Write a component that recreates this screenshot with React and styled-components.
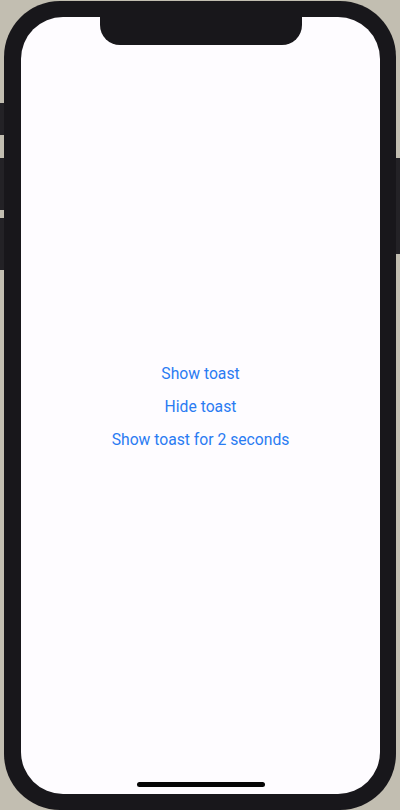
import React from "react";
import styled, { createGlobalStyle } from "styled-components";

const GlobalStyle = createGlobalStyle`
  html, body {
    margin: 0;
    padding: 0;
    background: #c2beb1;
    overflow: hidden;
  }
`;

const Page = styled.div`
  width: 400px;
  height: 810px;
  display: flex;
  align-items: flex-start;
`;

const Rail = styled.div`
  width: 4px;
  display: flex;
  flex-direction: column;
  flex-shrink: 0;
`;

const SideButton = styled.div`
  width: 4px;
  background: #232226;
  margin-top: ${(p) => p.gap}px;
  height: ${(p) => p.h}px;
`;

const Phone = styled.div`
  width: 392px;
  height: 809px;
  margin-top: 1px;
  flex-shrink: 0;
  box-sizing: border-box;
  padding: 16px 16px 16px 17px;
  background: #18171b;
  border-radius: 56px;
`;

const Screen = styled.div`
  height: 100%;
  background: #fefcff;
  border-radius: 42px;
  display: flex;
  flex-direction: column;
  align-items: center;
  overflow: hidden;
`;

const Notch = styled.div`
  width: 202px;
  height: 28px;
  flex-shrink: 0;
  background: #18171b;
  border-radius: 0 0 20px 20px;
`;

const Content = styled.div`
  flex: 1;
  display: flex;
  flex-direction: column;
  align-items: center;
  justify-content: center;
  gap: 13px;
  padding-top: 2px;
`;

const BottomBar = styled.div`
  height: 28px;
  flex-shrink: 0;
  display: flex;
  align-items: flex-end;
  padding-bottom: 7px;
  box-sizing: border-box;
`;

const HomeIndicator = styled.div`
  width: 128px;
  height: 5px;
  border-radius: 3px;
  background: #050505;
`;

const TextButton = styled.button`
  border: none;
  background: none;
  padding: 0;
  font-family: Roboto, "Noto Sans", sans-serif;
  font-size: 15.7px;
  line-height: 20px;
  color: #2a7bf2;
  cursor: pointer;
`;

export default function App() {
  return (
    <>
      <GlobalStyle />
      <Page>
        <Rail>
          <SideButton gap={103} h={32} />
          <SideButton gap={23} h={52} />
          <SideButton gap={8} h={52} />
        </Rail>
        <Phone>
          <Screen>
            <Notch />
            <Content>
              <TextButton>Show toast</TextButton>
              <TextButton>Hide toast</TextButton>
              <TextButton>Show toast for 2 seconds</TextButton>
            </Content>
            <BottomBar>
              <HomeIndicator />
            </BottomBar>
          </Screen>
        </Phone>
        <Rail>
          <SideButton gap={158} h={96} />
        </Rail>
      </Page>
    </>
  );
}
